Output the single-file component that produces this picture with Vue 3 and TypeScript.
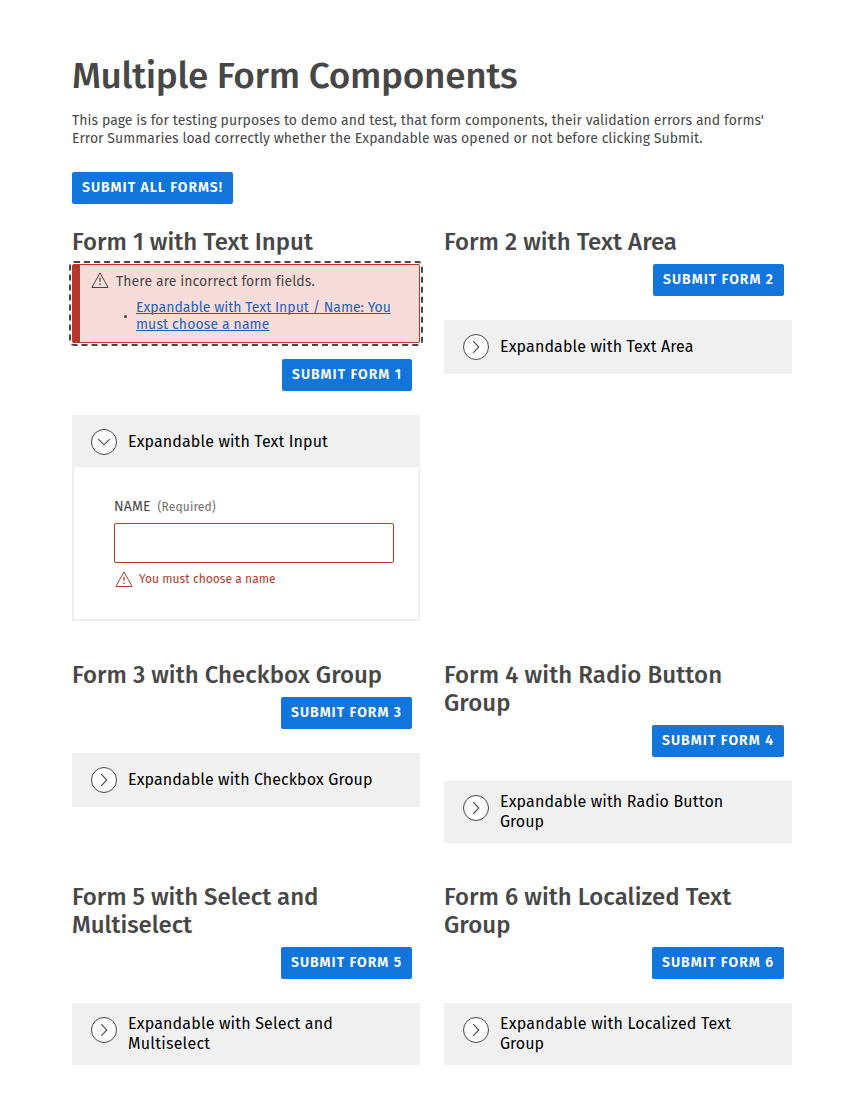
<script setup lang="ts">
import type { Directive } from 'vue'

interface Line { text: string; width: number }
interface FormBlock {
  id: number
  heading: Line[]
  button: number
  title: Line[]
  open?: boolean
}

// Tracks a line of text out (or in) so that it fills the given measure.
const vTrack: Directive<HTMLElement, number> = {
  mounted(el, { value }) {
    const base = el.getBoundingClientRect().width
    const count = (el.textContent ?? '').length
    el.style.letterSpacing = `${(value - base) / count}px`
  },
}

const intro: Line[] = [
  { text: "This page is for testing purposes to demo and test, that form components, their validation errors and forms'", width: 692 },
  { text: 'Error Summaries load correctly whether the Expandable was opened or not before clicking Submit.', width: 630.7 },
]

const summaryLink: Line[] = [
  { text: 'Expandable with Text Input / Name: You', width: 255 },
  { text: 'must choose a name', width: 133.5 },
]

const forms: FormBlock[] = [
  { id: 1, heading: [{ text: 'Form 1 with Text Input', width: 241 }], button: 110, title: [{ text: 'Expandable with Text Input', width: 200 }], open: true },
  { id: 2, heading: [{ text: 'Form 2 with Text Area', width: 233 }], button: 111, title: [{ text: 'Expandable with Text Area', width: 193.6 }] },
  { id: 3, heading: [{ text: 'Form 3 with Checkbox Group', width: 310.2 }], button: 111, title: [{ text: 'Expandable with Checkbox Group', width: 244.6 }] },
  { id: 4, heading: [{ text: 'Form 4 with Radio Button', width: 278.2 }, { text: 'Group', width: 66.5 }], button: 112, title: [{ text: 'Expandable with Radio Button', width: 223.4 }, { text: 'Group', width: 44 }] },
  { id: 5, heading: [{ text: 'Form 5 with Select and', width: 246.4 }, { text: 'Multiselect', width: 120 }], button: 111, title: [{ text: 'Expandable with Select and', width: 205 }, { text: 'Multiselect', width: 82.3 }] },
  { id: 6, heading: [{ text: 'Form 6 with Localized Text', width: 287.2 }, { text: 'Group', width: 66.5 }], button: 112, title: [{ text: 'Expandable with Localized Text', width: 231.3 }, { text: 'Group', width: 44 }] },
]
</script>

<template>
  <main class="page">
    <h1><span v-track="445.2" class="t">Multiple Form Components</span></h1>
    <p class="intro">
      <span v-for="l in intro" :key="l.text" class="row"><span v-track="l.width" class="t">{{ l.text }}</span></span>
    </p>
    <button class="btn" type="button"><span v-track="141" class="t">SUBMIT ALL FORMS!</span></button>

    <div class="grid">
      <section v-for="f in forms" :key="f.id" class="form">
        <h2>
          <span v-for="l in f.heading" :key="l.text" class="row"><span v-track="l.width" class="t">{{ l.text }}</span></span>
        </h2>

        <div v-if="f.open" class="summary">
          <div class="summary-head">
            <svg class="warn" width="18" height="16" viewBox="0 0 18 16" fill="none" stroke="currentColor">
              <path d="M9 .9 17.1 15.5H.9Z" stroke-linejoin="round" />
              <path d="M9 5.8v4M9 11.6v1.5" stroke-width="1.3" />
            </svg>
            <span v-track="198.3" class="t">There are incorrect form fields.</span>
          </div>
          <div class="summary-item">
            <i class="dot"></i>
            <a class="link">
              <span v-for="l in summaryLink" :key="l.text" class="row"><span v-track="l.width" class="t">{{ l.text }}</span></span>
            </a>
          </div>
        </div>

        <div class="actions">
          <button class="btn" type="button"><span v-track="f.button" class="t">SUBMIT FORM {{ f.id }}</span></button>
        </div>

        <div class="expandable">
          <div class="bar">
            <svg class="toggle" :class="{ open: f.open }" width="28" height="28" viewBox="0 0 28 28" fill="none">
              <circle cx="14" cy="14" r="12.5" fill="#fff" stroke="#474747" />
              <path d="m11.2 8.2 5.6 5.8-5.6 5.8" stroke="#474747" stroke-width="1.1" />
            </svg>
            <div class="title">
              <span v-for="l in f.title" :key="l.text" class="row"><span v-track="l.width" class="t">{{ l.text }}</span></span>
            </div>
          </div>
          <div v-if="f.open" class="body">
            <label class="label" for="name">
              <span v-track="36.6" class="t">NAME</span>
              <span v-track="58.2" class="t required">(Required)</span>
            </label>
            <input id="name" class="input" type="text" />
            <div class="error">
              <svg class="warn" width="18" height="16" viewBox="0 0 18 16" fill="none" stroke="currentColor">
                <path d="M9 .9 17.1 15.5H.9Z" stroke-linejoin="round" />
                <path d="M9 5.8v4M9 11.6v1.5" stroke-width="1.3" />
              </svg>
              <span v-track="136.7" class="t">You must choose a name</span>
            </div>
          </div>
        </div>
      </section>
    </div>
  </main>
</template>

<style>
body { background: #fff; }
</style>

<style scoped>
.page {
  box-sizing: border-box;
  width: 863px;
  height: 1097px;
  padding: 54px 71px 32px 72px;
  font-family: "Fira Sans", "Noto Sans", sans-serif;
  font-size: 14px;
  color: #474747;
}
h1, h2, p { margin: 0; }
h1 { font-size: 37px; line-height: 44px; font-weight: 500; }
.t { display: inline-block; white-space: nowrap; }
.row { display: block; }
.intro { margin-top: 14px; margin-bottom: 24px; line-height: 18px; }
.btn {
  display: block;
  height: 32px;
  padding: 0 10px;
  border: 0;
  border-radius: 2px;
  background: #1175dc;
  color: #fff;
  font: 600 14px/32px "Fira Sans", "Noto Sans", sans-serif;
}
.grid {
  display: grid;
  grid-template-columns: 348px 348px;
  gap: 40px 24px;
  margin-top: 24px;
}
h2 { font-size: 24px; line-height: 28px; font-weight: 500; }
.actions { display: flex; justify-content: flex-end; padding: 8px 8px 24px 0; }
.summary {
  box-sizing: border-box;
  height: 79px;
  margin-top: 8px;
  margin-bottom: 8px;
  padding: 6px 0 0 12px;
  border: 1px solid #b8372a;
  border-left-width: 8px;
  border-radius: 2px;
  outline: 2px dashed #474747;
  outline-offset: 1px;
  background: #f8dcd9;
}
.summary-head { display: flex; align-items: center; gap: 7px; height: 20px; margin-left: -1px; }
.summary-head .warn { margin-bottom: 2px; }
.warn { flex: none; }
.summary-item { display: flex; align-items: center; margin-top: 8px; padding-left: 32px; line-height: 17px; }
.dot { width: 3px; height: 3px; margin-right: 9px; margin-top: 1px; border-radius: 50%; background: #474747; }
.link { color: #1c62b9; }
.link .t { text-decoration: underline; text-decoration-thickness: 1px; text-underline-offset: 1px; text-decoration-skip-ink: none; }
.expandable { border: 2px solid #f0f0f0; }
.bar {
  display: flex;
  min-height: 50px;
  padding: 0 16px;
  background: #f0f0f0;
}
.toggle { flex: none; margin-top: 11px; }
.toggle.open path { transform: rotate(90deg); transform-origin: 14px 14px; }
.title {
  align-self: center;
  margin-left: 10px;
  padding: 9px 0;
  font-size: 16px;
  line-height: 20px;
  color: #000;
}
.body { box-sizing: border-box; height: 152px; padding: 29px 24px 0 40px; }
.label { display: flex; align-items: center; gap: 7px; height: 20px; }
.required { padding-top: 2px; font-size: 12px; color: #6f6f6f; }
.input {
  display: block;
  box-sizing: border-box;
  width: 280px;
  height: 40px;
  margin-top: 7px;
  border: 1px solid #b8372a;
  border-radius: 2px;
  background: #fff;
}
.error {
  display: flex;
  align-items: center;
  gap: 6px;
  height: 18px;
  margin-top: 7px;
  padding-left: 1px;
  font-size: 12px;
  color: #b8372a;
}
</style>
